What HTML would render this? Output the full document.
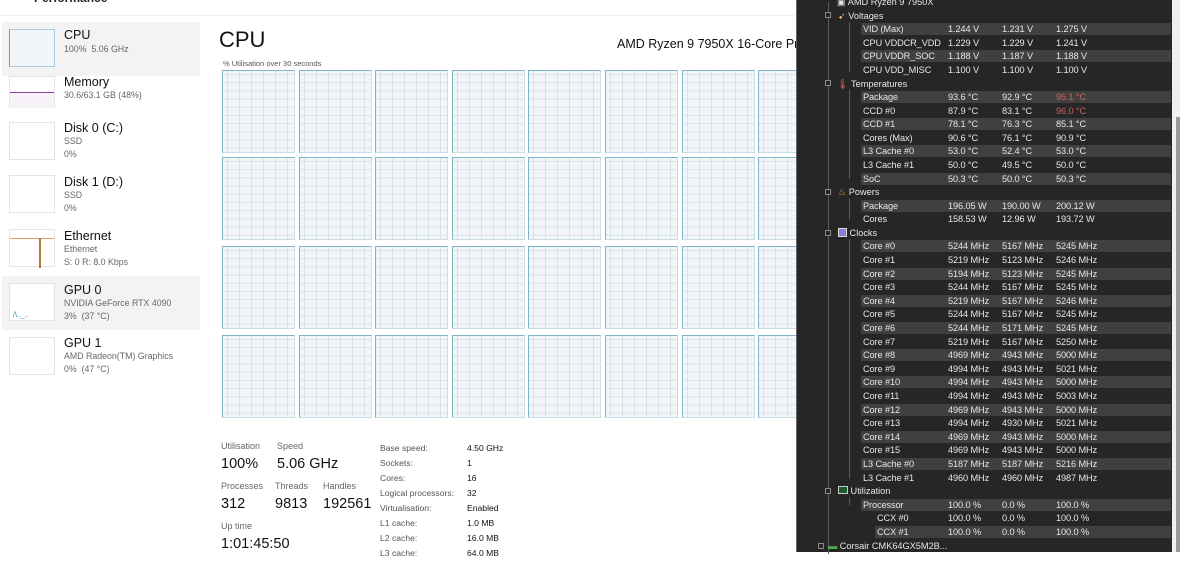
<!DOCTYPE html>
<html><head><meta charset="utf-8"><style>
*{margin:0;padding:0;box-sizing:border-box}
body{width:1180px;height:552px;overflow:hidden;background:#fff;font-family:"Liberation Sans",sans-serif;position:relative}
.a{position:absolute;white-space:nowrap}
.sel{position:absolute;left:2px;width:198px;height:54px;background:#f3f3f3}
.th{position:absolute;left:9px;width:46px;height:38px;background:#fff;border:1px solid #e4e4e4}
.t1{position:absolute;left:64px;font-size:12.5px;color:#111}
.t2{position:absolute;left:64px;font-size:8.8px;color:#666;line-height:13px}
.cell{position:absolute;width:73px;height:83px;background-color:#f2f6f9;border:1.5px solid #7fb3c8;border-right-color:#c9dde6;border-bottom-color:#c9dde6;
background-image:linear-gradient(to right,rgba(180,200,212,.4) 1px,transparent 1px),linear-gradient(to bottom,rgba(180,200,212,.4) 1px,transparent 1px);
background-size:12px 100%,100% 8.2px;background-position:4px 0,0 3px}
.lb{font-size:9px;color:#666}
.big{font-size:14.5px;color:#111}
.kv{font-size:8.6px;color:#555}
.kv2{font-size:8.6px;color:#111}
#hw{position:absolute;left:796px;top:0;width:376px;height:552px;background:#262626;border-left:1px solid #666}
#in{position:absolute;left:0;top:1.5px;width:376px;height:552px}
.r{position:absolute;left:64px;width:310px;height:12.5px;font-size:9.2px;color:#e6e6e6;line-height:12.5px;letter-spacing:-0.1px}
.r.s{background:#404040}
.r span{position:absolute;left:2px}
.r .c1{left:87px}.r .c2{left:141px}.r .c3{left:195px}
.h{position:absolute;font-size:9.2px;color:#e6e6e6;line-height:12.5px}
.red{color:#c86464}
.vl{position:absolute;width:1px;background:#5a5a5a}
.bx{position:absolute;width:6px;height:6px;border:1px solid #888;background:#262626}
</style></head><body>
<div class="a" style="left:34px;top:-9px;font-size:12px;font-weight:bold;color:#222">Performance</div>
<div class="a" style="left:0;top:15px;width:795px;height:1px;background:#eee"></div>

<div class="sel" style="top:22px"></div>
<div class="sel" style="top:276px"></div>
<div class="th" style="top:29px;background:#f1f6fa;border-color:#a9cde0;border-left:1.5px solid #5fa2c0"></div>
<div class="th" style="top:76px;height:32px"><div style="position:absolute;left:0;right:0;top:15px;height:16px;border-top:1px solid #8b3f98;background:#f7f3f8"></div></div>
<div class="th" style="top:122px"></div>
<div class="th" style="top:175px"></div>
<div class="th" style="top:229px"><div style="position:absolute;left:0;right:0;top:8px;border-top:1px solid #d8a26a"></div><div style="position:absolute;left:29px;top:8px;width:2px;height:30px;background:#b07a3a"></div></div>
<div class="th" style="top:283px"><div style="position:absolute;left:3px;bottom:1px;font-size:7px;color:#2b88c0;line-height:7px">/\.._..</div></div>
<div class="th" style="top:337px"></div>

<div class="t1" style="top:28px">CPU</div><div class="t2" style="top:43px">100%&nbsp; 5.06 GHz</div>
<div class="t1" style="top:75px">Memory</div><div class="t2" style="top:89px">30.6/63.1 GB (48%)</div>
<div class="t1" style="top:121px">Disk 0 (C:)</div><div class="t2" style="top:135px">SSD<br>0%</div>
<div class="t1" style="top:175px">Disk 1 (D:)</div><div class="t2" style="top:189px">SSD<br>0%</div>
<div class="t1" style="top:229px">Ethernet</div><div class="t2" style="top:243px">Ethernet<br>S: 0 R: 8.0 Kbps</div>
<div class="t1" style="top:283px">GPU 0</div><div class="t2" style="top:297px">NVIDIA GeForce RTX 4090<br>3%&nbsp; (37 °C)</div>
<div class="t1" style="top:336px">GPU 1</div><div class="t2" style="top:350px">AMD Radeon(TM) Graphics<br>0%&nbsp; (47 °C)</div>

<div class="a" style="left:219px;top:27px;font-size:22px;color:#111">CPU</div>
<div class="a" style="left:617px;top:37px;font-size:12.5px;color:#111">AMD Ryzen 9 7950X 16-Core Processor</div>
<div class="a" style="left:223px;top:59px;font-size:7.5px;color:#555">% Utilisation over 30 seconds</div>

<div id="grid">
<div class="cell" style="left:222px;top:70px"></div><div class="cell" style="left:299px;top:70px"></div><div class="cell" style="left:375px;top:70px"></div><div class="cell" style="left:452px;top:70px"></div><div class="cell" style="left:528px;top:70px"></div><div class="cell" style="left:605px;top:70px"></div><div class="cell" style="left:682px;top:70px"></div><div class="cell" style="left:758px;top:70px"></div>
<div class="cell" style="left:222px;top:157px"></div><div class="cell" style="left:299px;top:157px"></div><div class="cell" style="left:375px;top:157px"></div><div class="cell" style="left:452px;top:157px"></div><div class="cell" style="left:528px;top:157px"></div><div class="cell" style="left:605px;top:157px"></div><div class="cell" style="left:682px;top:157px"></div><div class="cell" style="left:758px;top:157px"></div>
<div class="cell" style="left:222px;top:246px"></div><div class="cell" style="left:299px;top:246px"></div><div class="cell" style="left:375px;top:246px"></div><div class="cell" style="left:452px;top:246px"></div><div class="cell" style="left:528px;top:246px"></div><div class="cell" style="left:605px;top:246px"></div><div class="cell" style="left:682px;top:246px"></div><div class="cell" style="left:758px;top:246px"></div>
<div class="cell" style="left:222px;top:335px"></div><div class="cell" style="left:299px;top:335px"></div><div class="cell" style="left:375px;top:335px"></div><div class="cell" style="left:452px;top:335px"></div><div class="cell" style="left:528px;top:335px"></div><div class="cell" style="left:605px;top:335px"></div><div class="cell" style="left:682px;top:335px"></div><div class="cell" style="left:758px;top:335px"></div>
</div>

<div class="a lb" style="left:221px;top:441px">Utilisation</div><div class="a lb" style="left:277px;top:441px">Speed</div>
<div class="a big" style="left:221px;top:456px">100%</div><div class="a big" style="left:277px;top:456px">5.06 GHz</div>
<div class="a lb" style="left:221px;top:481px">Processes</div><div class="a lb" style="left:275px;top:481px">Threads</div><div class="a lb" style="left:323px;top:481px">Handles</div>
<div class="a big" style="left:221px;top:496px">312</div><div class="a big" style="left:275px;top:496px">9813</div><div class="a big" style="left:323px;top:496px">192561</div>
<div class="a lb" style="left:221px;top:521px">Up time</div>
<div class="a big" style="left:221px;top:536px">1:01:45:50</div>

<div class="a kv" style="left:380px;top:441px;line-height:15px">Base speed:<br>Sockets:<br>Cores:<br>Logical processors:<br>Virtualisation:<br>L1 cache:<br>L2 cache:<br>L3 cache:</div>
<div class="a kv2" style="left:467px;top:441px;line-height:15px">4.50 GHz<br>1<br>16<br>32<br>Enabled<br>1.0 MB<br>16.0 MB<br>64.0 MB</div>

<div class="a" style="left:1172px;top:0;width:8px;height:552px;background:#f0f0f0"></div>
<div class="a" style="left:1176px;top:117px;width:4px;height:435px;background:#9a9a9a"></div>

<div id="hw"><div id="in">
<div class="vl" style="left:31px;top:0;height:552px"></div>
<div class="vl" style="left:52px;top:20px;height:50px"></div>
<div class="vl" style="left:52px;top:87px;height:90px"></div>
<div class="vl" style="left:52px;top:196px;height:22px"></div>
<div class="vl" style="left:52px;top:237px;height:240px"></div>
<div class="vl" style="left:52px;top:495px;height:8px"></div>

<div class="h" style="left:40px;top:-6px">▣ AMD Ryzen 9 7950X</div>
<div class="bx" style="left:28px;top:10px"></div><div class="h" style="left:41px;top:8px"><span style="color:#e8c040">➹</span> Voltages</div>
<div class="bx" style="left:28px;top:78px"></div><div class="h" style="left:40px;top:76px"><span style="color:#e06060">🌡</span> Temperatures</div>
<div class="bx" style="left:28px;top:187px"></div><div class="h" style="left:41px;top:184px"><span style="color:#f0a040">♨</span> Powers</div>
<div class="bx" style="left:28px;top:228px"></div><div class="h" style="left:41px;top:225px"><span style="display:inline-block;width:9px;height:9px;background:#8a7ad0;border:1px solid #ddd;vertical-align:-1px"></span> Clocks</div>
<div class="bx" style="left:28px;top:486px"></div><div class="h" style="left:41px;top:483px"><span style="display:inline-block;width:10px;height:8px;background:#1d5a2a;border:1px solid #ccc;vertical-align:0"></span> Utilization</div>
<div class="bx" style="left:21px;top:541px"></div><div class="h" style="left:31px;top:538px"><span style="color:#4caf50">▬</span> Corsair CMK64GX5M2B...</div>

<div class="r s" style="top:21px"><span>VID (Max)</span><span class="c1">1.244 V</span><span class="c2">1.231 V</span><span class="c3">1.275 V</span></div>
<div class="r" style="top:35px"><span>CPU VDDCR_VDD</span><span class="c1">1.229 V</span><span class="c2">1.229 V</span><span class="c3">1.241 V</span></div>
<div class="r s" style="top:48px"><span>CPU VDDR_SOC</span><span class="c1">1.188 V</span><span class="c2">1.187 V</span><span class="c3">1.188 V</span></div>
<div class="r" style="top:62px"><span>CPU VDD_MISC</span><span class="c1">1.100 V</span><span class="c2">1.100 V</span><span class="c3">1.100 V</span></div>
<div class="r s" style="top:89px"><span>Package</span><span class="c1">93.6 °C</span><span class="c2">92.9 °C</span><span class="c3 red">95.1 °C</span></div>
<div class="r" style="top:103px"><span>CCD #0</span><span class="c1">87.9 °C</span><span class="c2">83.1 °C</span><span class="c3 red">96.0 °C</span></div>
<div class="r s" style="top:116px"><span>CCD #1</span><span class="c1">78.1 °C</span><span class="c2">76.3 °C</span><span class="c3">85.1 °C</span></div>
<div class="r" style="top:130px"><span>Cores (Max)</span><span class="c1">90.6 °C</span><span class="c2">76.1 °C</span><span class="c3">90.9 °C</span></div>
<div class="r s" style="top:143px"><span>L3 Cache #0</span><span class="c1">53.0 °C</span><span class="c2">52.4 °C</span><span class="c3">53.0 °C</span></div>
<div class="r" style="top:157px"><span>L3 Cache #1</span><span class="c1">50.0 °C</span><span class="c2">49.5 °C</span><span class="c3">50.0 °C</span></div>
<div class="r s" style="top:171px"><span>SoC</span><span class="c1">50.3 °C</span><span class="c2">50.0 °C</span><span class="c3">50.3 °C</span></div>
<div class="r s" style="top:198px"><span>Package</span><span class="c1">196.05 W</span><span class="c2">190.00 W</span><span class="c3">200.12 W</span></div>
<div class="r" style="top:211px"><span>Cores</span><span class="c1">158.53 W</span><span class="c2">12.96 W</span><span class="c3">193.72 W</span></div>
<div class="r s" style="top:238px"><span>Core #0</span><span class="c1">5244 MHz</span><span class="c2">5167 MHz</span><span class="c3">5245 MHz</span></div>
<div class="r" style="top:252px"><span>Core #1</span><span class="c1">5219 MHz</span><span class="c2">5123 MHz</span><span class="c3">5246 MHz</span></div>
<div class="r s" style="top:266px"><span>Core #2</span><span class="c1">5194 MHz</span><span class="c2">5123 MHz</span><span class="c3">5245 MHz</span></div>
<div class="r" style="top:279px"><span>Core #3</span><span class="c1">5244 MHz</span><span class="c2">5167 MHz</span><span class="c3">5245 MHz</span></div>
<div class="r s" style="top:293px"><span>Core #4</span><span class="c1">5219 MHz</span><span class="c2">5167 MHz</span><span class="c3">5246 MHz</span></div>
<div class="r" style="top:306px"><span>Core #5</span><span class="c1">5244 MHz</span><span class="c2">5167 MHz</span><span class="c3">5245 MHz</span></div>
<div class="r s" style="top:320px"><span>Core #6</span><span class="c1">5244 MHz</span><span class="c2">5171 MHz</span><span class="c3">5245 MHz</span></div>
<div class="r" style="top:334px"><span>Core #7</span><span class="c1">5219 MHz</span><span class="c2">5167 MHz</span><span class="c3">5250 MHz</span></div>
<div class="r s" style="top:347px"><span>Core #8</span><span class="c1">4969 MHz</span><span class="c2">4943 MHz</span><span class="c3">5000 MHz</span></div>
<div class="r" style="top:361px"><span>Core #9</span><span class="c1">4994 MHz</span><span class="c2">4943 MHz</span><span class="c3">5021 MHz</span></div>
<div class="r s" style="top:374px"><span>Core #10</span><span class="c1">4994 MHz</span><span class="c2">4943 MHz</span><span class="c3">5000 MHz</span></div>
<div class="r" style="top:388px"><span>Core #11</span><span class="c1">4994 MHz</span><span class="c2">4943 MHz</span><span class="c3">5003 MHz</span></div>
<div class="r s" style="top:402px"><span>Core #12</span><span class="c1">4969 MHz</span><span class="c2">4943 MHz</span><span class="c3">5000 MHz</span></div>
<div class="r" style="top:415px"><span>Core #13</span><span class="c1">4994 MHz</span><span class="c2">4930 MHz</span><span class="c3">5021 MHz</span></div>
<div class="r s" style="top:429px"><span>Core #14</span><span class="c1">4969 MHz</span><span class="c2">4943 MHz</span><span class="c3">5000 MHz</span></div>
<div class="r" style="top:442px"><span>Core #15</span><span class="c1">4969 MHz</span><span class="c2">4943 MHz</span><span class="c3">5000 MHz</span></div>
<div class="r s" style="top:456px"><span>L3 Cache #0</span><span class="c1">5187 MHz</span><span class="c2">5187 MHz</span><span class="c3">5216 MHz</span></div>
<div class="r" style="top:470px"><span>L3 Cache #1</span><span class="c1">4960 MHz</span><span class="c2">4960 MHz</span><span class="c3">4987 MHz</span></div>
<div class="r s" style="top:497px"><span>Processor</span><span class="c1">100.0 %</span><span class="c2">0.0 %</span><span class="c3">100.0 %</span></div>
<div class="r" style="top:510px"><span style="left:16px">CCX #0</span><span class="c1">100.0 %</span><span class="c2">0.0 %</span><span class="c3">100.0 %</span></div>
<div class="r s" style="top:524px;left:78px;width:296px"><span>CCX #1</span><span style="left:73px">100.0 %</span><span style="left:127px">0.0 %</span><span style="left:181px">100.0 %</span></div>
</div></div>
</body></html>
